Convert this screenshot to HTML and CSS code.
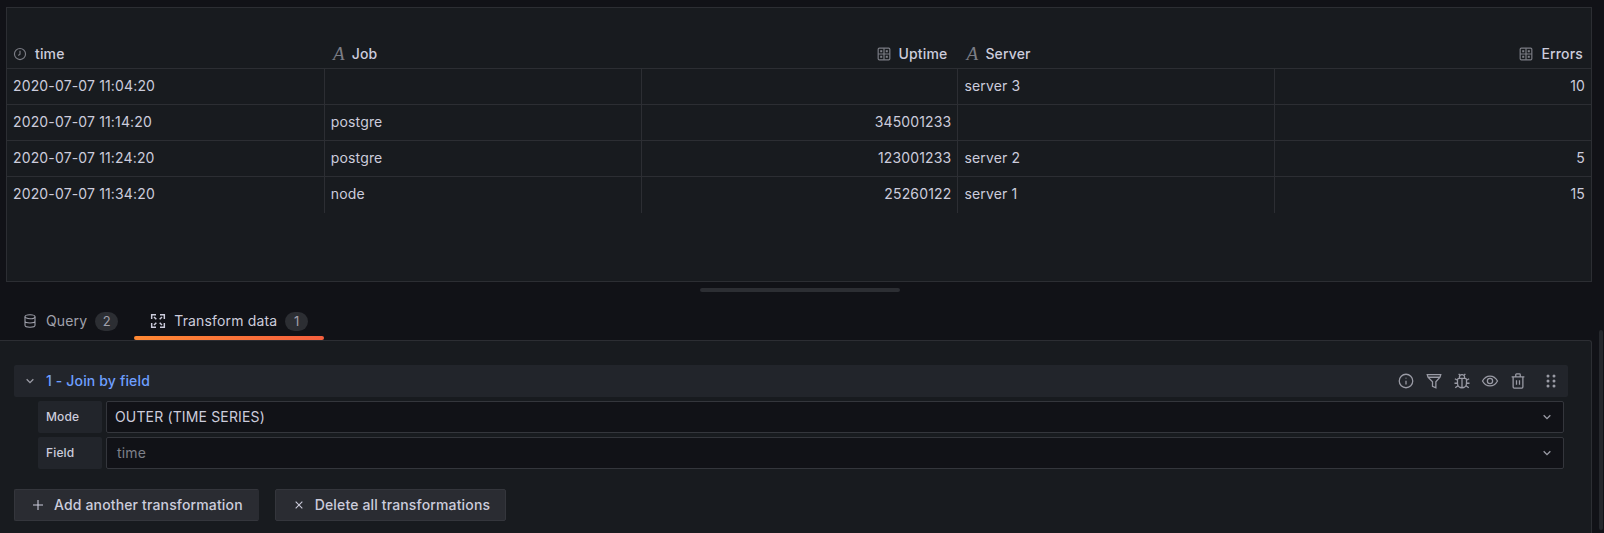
FILE: index.html
```html
<!DOCTYPE html>
<html lang="en">
<head>
<meta charset="utf-8">
<title>Transform data</title>
<link rel="stylesheet" href="styles.css">
</head>
<body>
<section class="panel">
  <div class="table">
    <div class="th"><svg class="ficon" viewBox="0 0 24 24"><circle cx="12" cy="12" r="9.500"/><path d="M12 6.500V12.500L9 14.500"/></svg><span>time</span></div>
    <div class="th"><i class="str">A</i><span>Job</span></div>
    <div class="th right"><svg class="ficon" viewBox="0 0 24 24"><rect x="2" y="2" width="20" height="20" rx="2"/><path d="M12 2V22M2 12H22"/><rect class="fill" x="5.500" y="5.500" width="3.500" height="3.500"/><rect class="fill" x="15" y="5.500" width="3.500" height="3.500"/><rect class="fill" x="5.500" y="15" width="3.500" height="3.500"/><rect class="fill" x="15" y="15" width="3.500" height="3.500"/></svg><span>Uptime</span></div>
    <div class="th"><i class="str">A</i><span>Server</span></div>
    <div class="th right last"><svg class="ficon" viewBox="0 0 24 24"><rect x="2" y="2" width="20" height="20" rx="2"/><path d="M12 2V22M2 12H22"/><rect class="fill" x="5.500" y="5.500" width="3.500" height="3.500"/><rect class="fill" x="15" y="5.500" width="3.500" height="3.500"/><rect class="fill" x="5.500" y="15" width="3.500" height="3.500"/><rect class="fill" x="15" y="15" width="3.500" height="3.500"/></svg><span>Errors</span></div>

    <div class="td">2020-07-07 11:04:20</div><div class="td"></div><div class="td num"></div><div class="td">server 3</div><div class="td num">10</div>
    <div class="td">2020-07-07 11:14:20</div><div class="td">postgre</div><div class="td num">345001233</div><div class="td"></div><div class="td num"></div>
    <div class="td">2020-07-07 11:24:20</div><div class="td">postgre</div><div class="td num">123001233</div><div class="td">server 2</div><div class="td num">5</div>
    <div class="td">2020-07-07 11:34:20</div><div class="td">node</div><div class="td num">25260122</div><div class="td">server 1</div><div class="td num">15</div>
  </div>
</section>

<div class="splitter"><div class="handle"></div></div>

<nav class="tabs">
  <div class="tab"><svg class="icon" viewBox="0 0 24 24"><ellipse cx="12" cy="5.500" rx="7.500" ry="3"/><path d="M4.500 5.500V18.500C4.500 20.200 7.900 21.500 12 21.500S19.500 20.200 19.500 18.500V5.500M4.500 12C4.500 13.700 7.900 15 12 15S19.500 13.700 19.500 12"/></svg><span class="tab-label">Query</span><span class="count">2</span></div>
  <div class="tab active"><svg class="icon bold" viewBox="0 0 24 24"><path d="M9 2.500H2.500V9M15 2.500H21.500V9M2.500 15V21.500H9M21.500 15V21.500H15M9.500 9.500L6 6M14.500 9.500L18 6M9.500 14.500L6 18M14.500 14.500L18 18"/></svg><span class="tab-label">Transform data</span><span class="count">1</span></div>
</nav>

<main class="content">
  <div class="transform">
    <header class="row-head">
      <svg class="chev" viewBox="0 0 24 24"><path d="M7 9.500L12 14.500L17 9.500"/></svg>
      <span class="row-title">1 - Join by field</span>
      <div class="actions">
        <svg class="act" viewBox="0 0 24 24"><circle cx="12" cy="12" r="9"/><path d="M12 11.500V16.500M12 7.500V8.500"/></svg>
        <svg class="act" viewBox="0 0 24 24"><path d="M3 3.500H21L20 7L14.500 13V21L10 19V13L4 7ZM4 7H20"/></svg>
        <svg class="act" viewBox="0 0 24 24"><path d="M8 8.500H16A2 2 0 0 1 18 10.500V15A6 6 0 0 1 6 15V10.500A2 2 0 0 1 8 8.500ZM12 9V20.500M8.500 8.500V7A3.500 3.500 0 0 1 15.500 7V8.500M9 4L7.500 2.500M15 4L16.500 2.500M6 11L2.500 9M18 11L21.500 9M6 15H2M18 15H22M7 18L3 21M17 18L21 21"/></svg>
        <svg class="act" viewBox="0 0 24 24"><path d="M2 12C4.500 7.500 7.500 5.500 12 5.500S19.500 7.500 22 12C19.500 16.500 16.500 18.500 12 18.500S4.500 16.500 2 12Z"/><circle cx="12" cy="12" r="3.500"/></svg>
        <svg class="act" viewBox="0 0 24 24"><path d="M3.500 6.500H20.500M5.500 6.500V20A1.500 1.500 0 0 0 7 21.500H17A1.500 1.500 0 0 0 18.500 20V6.500M9 6.500V3.500A1 1 0 0 1 10 2.500H14A1 1 0 0 1 15 3.500V6.500M10 11V17M14 11V17"/></svg>
        <svg class="act grip" viewBox="0 0 24 24"><circle class="fill" cx="8" cy="5.300" r="2"/><circle class="fill" cx="16" cy="5.300" r="2"/><circle class="fill" cx="8" cy="12" r="2"/><circle class="fill" cx="16" cy="12" r="2"/><circle class="fill" cx="8" cy="18.700" r="2"/><circle class="fill" cx="16" cy="18.700" r="2"/></svg>
      </div>
    </header>
    <div class="field">
      <label class="field-label">Mode</label>
      <div class="select"><span>OUTER (TIME SERIES)</span><svg class="chev" viewBox="0 0 24 24"><path d="M7 9.500L12 14.500L17 9.500"/></svg></div>
    </div>
    <div class="field">
      <label class="field-label">Field</label>
      <div class="select placeholder"><span>time</span><svg class="chev" viewBox="0 0 24 24"><path d="M7 9.500L12 14.500L17 9.500"/></svg></div>
    </div>
    <div class="buttons">
      <button class="btn"><svg class="icon" viewBox="0 0 24 24"><path d="M12 4.500V19.500M4.500 12H19.500"/></svg>Add another transformation</button>
      <button class="btn"><svg class="icon" viewBox="0 0 24 24"><path d="M7 7L17 17M17 7L7 17"/></svg>Delete all transformations</button>
    </div>
  </div>
  <div class="scrollbar"></div>
</main>
</body>
</html>
```
FILE: styles.css
```css
* { box-sizing: border-box; }
html, body { margin: 0; height: 533px; overflow: hidden; }
body {
  background: #111217;
  color: #ccccdc;
  font: 400 14px/20px Inter, "Noto Sans", sans-serif;
  letter-spacing: 0.15px;
  padding-top: 7px;
}
svg { fill: none; stroke: currentColor; stroke-width: 1.6; flex: none; }
svg .fill { fill: currentColor; stroke: none; }

.panel {
  height: 275px;
  margin: 0 12px 0 6px;
  background: #181b1f;
  border: 1px solid #2c2e33;
  padding-top: 25px;
}
.table { display: grid; grid-template-columns: repeat(5, 1fr); grid-template-rows: 36px repeat(4, 36px); }
.th {
  display: flex;
  align-items: flex-end;
  gap: 8px;
  padding: 0 10px 4px 6px;
  font-weight: 500;
  border-bottom: 1px solid #2c2e33;
}
.th.right { justify-content: flex-end; }
.th.last { padding-right: 8px; }
.ficon { width: 14px; height: 14px; color: #7b7d85; stroke-width: 2; margin-bottom: 3px; }
.str {
  font: italic 400 19px/20px "Liberation Serif", serif;
  color: #7b7d85;
  width: 14px;
  text-align: center;
  margin: 0 -2px 0 2px;
  letter-spacing: 0;
}
.td {
  padding: 0 6px;
  line-height: 34px;
  white-space: nowrap;
  border-bottom: 1px solid #2c2e33;
  border-left: 1px solid #2c2e33;
}
.td:nth-child(5n + 1) { border-left: 0; }
.td:nth-last-child(-n + 5) { border-bottom: 0; }
.td.num { text-align: right; }

.splitter { height: 15px; display: flex; justify-content: center; padding: 6px 4px 0 0; }
.handle { width: 200px; height: 4px; background: #2c2e33; border-radius: 2px; }

.tabs { display: flex; height: 43px; padding-left: 6px; }
.tab {
  display: flex;
  align-items: center;
  gap: 8px;
  padding: 8px 16px 3px;
  color: #a0a1ac;
  position: relative;
}
.tab.active { color: #ccccdc; }
.tab.active::after {
  content: "";
  position: absolute;
  left: 0; right: 0; bottom: 0;
  height: 4px;
  border-radius: 2px;
  background: linear-gradient(270deg, #f55f3e, #ff8833);
}
.icon { width: 16px; height: 16px; }
.icon.bold { stroke-width: 2.2; }
.count {
  min-width: 23px;
  height: 19px;
  line-height: 19px;
  padding: 0 7px;
  border-radius: 10px;
  background: #2c2e33;
  font-size: 13px;
  text-align: center;
  color: #a0a1ac;
}

.content { display: flex; height: 193px; }
.transform {
  width: 1592px;
  background: #181b1f;
  border-top: 1px solid #2c2e33;
  border-right: 1px solid #2c2e33;
  border-top-right-radius: 3px;
  padding: 24px 24px 0 14px;
}
.row-head {
  display: flex;
  align-items: center;
  width: 1554px;
  height: 32px;
  background: #22252b;
  border-radius: 2px;
  color: #6e9fff;
  font-weight: 500;
  padding-left: 8px;
}
.row-head .chev { margin-right: 8px; }
.chev { width: 16px; height: 16px; color: #9a9ba5; stroke-width: 2; }
.actions { margin-left: auto; display: flex; align-items: center; gap: 10px; color: #9a9ba5; padding-right: 8px; }
.act { width: 18px; height: 18px; stroke-width: 1.7; }
.grip { margin-left: 5px; }
.field { display: flex; gap: 4px; margin: 4px 0 0 24px; height: 32px; width: 1526px; }
.field-label {
  width: 64px;
  background: #22252b;
  border-radius: 2px;
  padding-left: 8px;
  font-size: 12px;
  font-weight: 500;
  line-height: 32px;
}
.select {
  flex: 1;
  display: flex;
  align-items: center;
  justify-content: space-between;
  background: #111217;
  border: 1px solid #34363c;
  border-radius: 2px;
  padding: 0 8px 0 8px;
}
.select span { position: relative; top: 0; }
.select.placeholder { color: #7e8089; padding-left: 10px; }
.buttons { display: flex; gap: 16px; margin-top: 20px; }
.btn {
  display: flex;
  align-items: center;
  height: 32px;
  padding: 0 15px;
  gap: 8px;
  background: #2a2c32;
  border: 1px solid #34363c;
  border-radius: 2px;
  color: #ccccdc;
  font: 500 14px/20px Inter, "Noto Sans", sans-serif;
  letter-spacing: 0.15px;
}
.btn:first-child { border-right-color: #2a2c32; }
.scrollbar { width: 4px; height: 200px; margin: -10px 0 0 7px; background: #25272c; border-radius: 2px; }
```
